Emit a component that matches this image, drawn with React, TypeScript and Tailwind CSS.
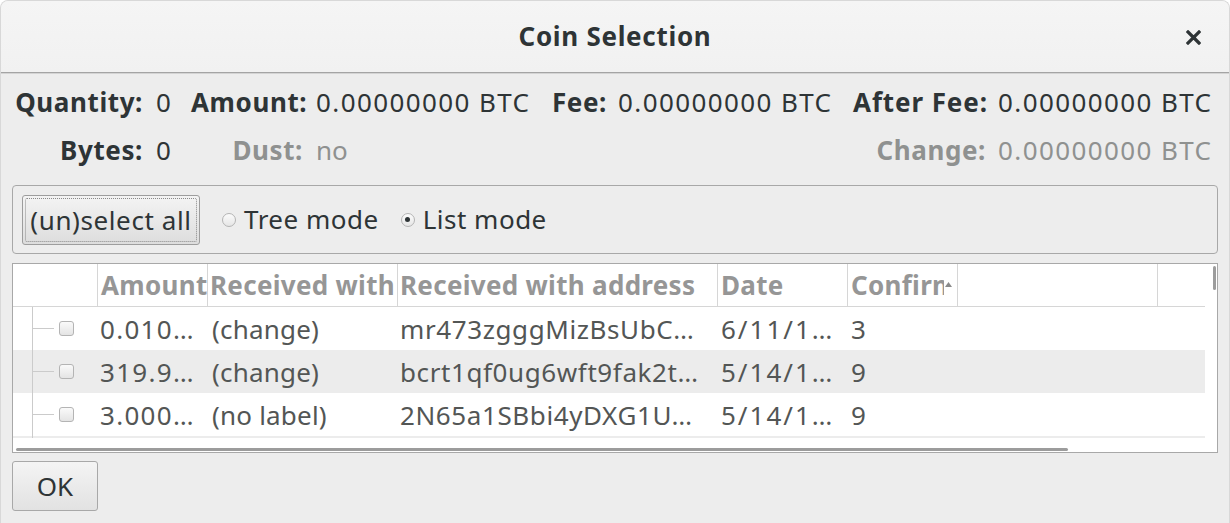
import React from 'react';

const rows = [
  { amount: '0.010…', label: '(change)', address: 'mr473zgggMizBsUbC…', date: '6/11/1…', conf: '3' },
  { amount: '319.9…', label: '(change)', address: 'bcrt1qf0ug6wft9fak2t…', date: '5/14/1…', conf: '9' },
  { amount: '3.000…', label: '(no label)', address: '2N65a1SBbi4yDXG1U…', date: '5/14/1…', conf: '9' },
];

const cols = 'grid grid-cols-[84px_110px_190px_320px_130px_110px_200px_48px]';

const Radio: React.FC<{ checked?: boolean; label: string }> = ({ checked, label }) => (
  <label className="flex items-center gap-[8px]">
    <span className="w-[14px] h-[14px] rounded-full border border-[#b4b4b4] bg-gradient-to-b from-[#fbfbfb] to-[#e6e6e6] flex items-center justify-center">
      {checked && <span className="w-[5px] h-[5px] rounded-full bg-[#2e3436]" />}
    </span>
    <span className="tracking-[0.5px]">{label}</span>
  </label>
);

const App: React.FC = () => {
  return (
    <div className="w-[1230px] h-[523px] bg-white overflow-hidden font-['Noto_Sans',sans-serif] text-[26px] text-[#2e3436]">
      <div className="h-full flex flex-col bg-[#ededed] rounded-t-[8px] overflow-hidden border-t border-x border-[#d8d8d8]">
        {/* Title bar */}
        <div className="relative h-[72px] shrink-0 bg-gradient-to-b from-[#f5f5f5] to-[#f1f1f1] border-b border-[#a4a4a4] shadow-[0_1px_0_#d4d4d4] flex items-center justify-center">
          <span className="font-bold leading-none tracking-[0.7px] mt-[-2px]">Coin Selection</span>
          <button className="absolute right-[28px] top-[28px] w-[16px] h-[16px] flex items-center justify-center">
            <svg width="15" height="15" viewBox="0 0 15 15">
              <path d="M2 2 L13 13 M13 2 L2 13" stroke="#2e3436" strokeWidth="3.2" strokeLinecap="square" />
            </svg>
          </button>
        </div>

        {/* Summary */}
        <div className="pt-[5px] grid grid-cols-[142px_48px_112px_249px_53px_248px_133px_1fr] auto-rows-[48px] items-center whitespace-nowrap leading-none">
          <span className="text-right font-bold tracking-[0.6px]">Quantity:</span>
          <span className="pl-[13px]">0</span>
          <span className="text-right font-bold tracking-[0.6px]">Amount:</span>
          <span className="pl-[13px] tracking-[1.4px]">0.00000000 BTC</span>
          <span className="text-right font-bold tracking-[0.6px]">Fee:</span>
          <span className="pl-[13px] tracking-[1.4px]">0.00000000 BTC</span>
          <span className="text-right font-bold tracking-[0.9px]">After Fee:</span>
          <span className="pl-[12px] tracking-[1.4px]">0.00000000 BTC</span>

          <span className="text-right font-bold tracking-[0.6px]">Bytes:</span>
          <span className="pl-[13px]">0</span>
          <span className="text-right font-bold tracking-[0.6px] text-[#8f9190]">Dust:</span>
          <span className="pl-[13px] text-[#8f9190]">no</span>
          <span />
          <span />
          <span className="text-right font-bold tracking-[0.6px] text-[#8f9190]">Change:</span>
          <span className="pl-[12px] tracking-[1.4px] text-[#8f9190]">0.00000000 BTC</span>
        </div>

        {/* Mode box */}
        <div className="mt-[11px] mx-[11px] h-[69px] shrink-0 border border-[#a8a8a8] rounded-[4px] flex items-center pl-[9px] whitespace-nowrap">
          <button className="w-[178px] h-[50px] rounded-[3px] border border-[#9d9d9d] bg-gradient-to-b from-[#f4f4f4] to-[#dddddd] p-[2px]">
            <span className="h-full flex items-center justify-center border border-dotted border-[#8a8a8a] rounded-[2px] leading-none tracking-[0.6px]">
              (un)select all
            </span>
          </button>
          <div className="ml-[22px]">
            <Radio label="Tree mode" />
          </div>
          <div className="ml-[22px]">
            <Radio checked label="List mode" />
          </div>
        </div>

        {/* Table */}
        <div className="relative mt-[9px] mx-[11px] h-[190px] shrink-0 border border-[#a8a8a8] bg-white overflow-hidden whitespace-nowrap leading-none">
          <div className={`${cols} h-[43px] border-b border-[#d6d6d6] w-[1192px] font-bold text-[#969696] tracking-[0.3px]`}>
            <div />
            <div className="border-l border-[#d6d6d6] pl-[3px] flex items-center overflow-hidden">Amount</div>
            <div className="border-l border-[#d6d6d6] pl-[2px] flex items-center overflow-hidden">Received with</div>
            <div className="border-l border-[#d6d6d6] pl-[2px] flex items-center overflow-hidden">Received with address</div>
            <div className="border-l border-[#d6d6d6] pl-[3px] flex items-center overflow-hidden">Date</div>
            <div className="border-l border-[#d6d6d6] pl-[3px] flex items-center">
              <span className="w-[93px] overflow-hidden">Confirmations</span>
              <svg width="7" height="5" viewBox="0 0 7 5" className="ml-[1px] mt-[-2px]">
                <path d="M0 5 L3.5 0 L7 5 Z" fill="#8a8a8a" />
              </svg>
            </div>
            <div className="border-l border-[#d6d6d6]" />
            <div className="border-l border-[#d6d6d6]" />
          </div>

          {rows.map((r, i) => (
            <div key={i} className={`${cols} h-[43px] w-[1192px] text-[#535655] ${i === 1 ? 'bg-[#ececec]' : 'bg-white'}`}>
              <div className="flex items-center pl-[19px]">
                <span className="w-px self-stretch bg-[#cbcbcb]" />
                <span className="w-[21px] h-px bg-[#cbcbcb]" />
                <span className="ml-[5px] w-[15px] h-[15px] rounded-[3px] border border-[#b4b4b4] bg-gradient-to-b from-[#fafafa] to-[#e4e4e4]" />
              </div>
              <div className="pl-[3px] flex items-center tracking-[1.3px]">{r.amount}</div>
              <div className="pl-[5px] flex items-center tracking-[0.2px]">{r.label}</div>
              <div className="pl-[3px] flex items-center tracking-[0.6px]">{r.address}</div>
              <div className="pl-[4px] flex items-center tracking-[2px]">{r.date}</div>
              <div className="pl-[4px] flex items-center">{r.conf}</div>
              <div />
              <div />
            </div>
          ))}
          <div className="h-[2px] w-[1192px] bg-[#ececec] pl-[19px]">
            <div className="w-px h-full bg-[#cbcbcb]" />
          </div>

          {/* scrollbars */}
          <div className="absolute right-[1px] top-[2px] w-[3px] h-[24px] rounded-full bg-[#9c9c9c]" />
          <div className="absolute left-[3px] bottom-[1px] w-[1052px] h-[3px] rounded-full bg-[#9c9c9c]" />
        </div>

        {/* Footer */}
        <div className="mt-[8px] ml-[11px]">
          <button className="w-[86px] h-[50px] rounded-[3px] border border-[#a8a8a8] bg-gradient-to-b from-[#f4f4f4] to-[#e2e2e2] leading-none">
            OK
          </button>
        </div>
      </div>
    </div>
  );
};

export default App;
